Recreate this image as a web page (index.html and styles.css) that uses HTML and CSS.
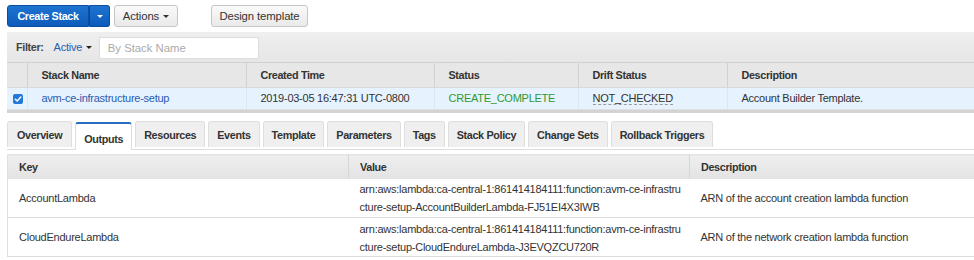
FILE: index.html
```html
<!DOCTYPE html>
<html>
<head>
<meta charset="utf-8">
<link rel="stylesheet" href="styles.css">
</head>
<body>
<div class="page">
  <div class="toolbar">
    <div class="split">
      <button class="btn-primary main">Create Stack</button>
      <button class="btn-primary caret-btn"><span class="caret white"></span></button>
    </div>
    <button class="btn actions">Actions <span class="caret"></span></button>
    <button class="btn design">Design template</button>
  </div>

  <div class="filterbar">
    <span class="filter-label">Filter:</span>
    <span class="filter-active">Active <span class="caret dark"></span></span>
    <input class="filter-input" type="text" placeholder="By Stack Name">
  </div>

  <table class="stacks">
    <colgroup>
      <col class="c0"><col class="c1"><col class="c2"><col class="c3"><col class="c4"><col class="c5">
    </colgroup>
    <thead>
      <tr><th></th><th>Stack Name</th><th>Created Time</th><th>Status</th><th>Drift Status</th><th>Description</th></tr>
    </thead>
    <tbody>
      <tr class="selected">
        <td class="chk"><span class="checkbox"><svg viewBox="0 0 10 10" width="10" height="10"><path d="M2.3 5.2 L4.2 7 L7.8 3" fill="none" stroke="#fff" stroke-width="1.5" stroke-linecap="round" stroke-linejoin="round"/></svg></span></td>
        <td class="link">avm-ce-infrastructure-setup</td>
        <td>2019-03-05 16:47:31 UTC-0800</td>
        <td class="ok">CREATE_COMPLETE</td>
        <td><span class="dotted">NOT_CHECKED</span></td>
        <td>Account Builder Template.</td>
      </tr>
    </tbody>
  </table>
  <div class="divider"></div>

  <div class="tabs">
    <div class="tab">Overview</div>
    <div class="tab active">Outputs</div>
    <div class="tab">Resources</div>
    <div class="tab">Events</div>
    <div class="tab">Template</div>
    <div class="tab">Parameters</div>
    <div class="tab">Tags</div>
    <div class="tab">Stack Policy</div>
    <div class="tab">Change Sets</div>
    <div class="tab">Rollback Triggers</div>
  </div>

  <table class="outputs">
    <colgroup><col class="k"><col class="v"><col class="d"></colgroup>
    <thead>
      <tr><th>Key</th><th>Value</th><th>Description</th></tr>
    </thead>
    <tbody>
      <tr>
        <td>AccountLambda</td>
        <td class="val"><span class="ln">arn:aws:lambda:ca-central-1:861414184111:function:avm-ce-infrastru</span><span class="ln">cture-setup-AccountBuilderLambda-FJ51EI4X3IWB</span></td>
        <td>ARN of the account creation lambda function</td>
      </tr>
      <tr>
        <td>CloudEndureLambda</td>
        <td class="val"><span class="ln">arn:aws:lambda:ca-central-1:861414184111:function:avm-ce-infrastru</span><span class="ln">cture-setup-CloudEndureLambda-J3EVQZCU720R</span></td>
        <td>ARN of the network creation lambda function</td>
      </tr>
    </tbody>
  </table>
</div>
</body>
</html>
```
FILE: styles.css
```css
* { box-sizing: border-box; }
html, body { margin: 0; padding: 0; background: #fff; }
body {
  font-family: "Liberation Sans", Arial, Helvetica, sans-serif;
  font-size: 11px;
  letter-spacing: -0.25px;
  color: #333;
  width: 974px;
  height: 260px;
  overflow: hidden;
}
.page { padding-left: 7px; }
th, .tab, .filter-label, .btn-primary {
  font-weight: bold;
  font-size: 10.8px;
  letter-spacing: -0.35px;
}

.toolbar {
  display: flex;
  padding-top: 5px;
  height: 32px;
  align-items: flex-start;
}
button { font-family: inherit; margin: 0; cursor: pointer; }
.split { display: flex; }
.btn-primary {
  height: 22px;
  border: 1px solid #0b4fa0;
  background: linear-gradient(#1f74d0, #0c5bbb);
  color: #fff;
}
.main {
  width: 82px;
  border-radius: 3px 0 0 3px;
  padding: 0;
}
.caret-btn {
  width: 21px;
  border-left: 1px solid #0a4896;
  border-radius: 0 3px 3px 0;
  padding: 0;
  display: flex;
  align-items: center;
  justify-content: center;
}
.caret {
  display: inline-block;
  width: 0; height: 0;
  border-left: 3px solid transparent;
  border-right: 3px solid transparent;
  border-top: 3px solid #333;
  vertical-align: 2px;
  margin-left: 1px;
}
.caret.white { border-top-color: #fff; }
.caret.dark { border-top-color: #222; }
.btn {
  height: 22px;
  border: 1px solid #c6c6c6;
  border-radius: 3px;
  background: linear-gradient(#fafafa, #e9e9e9);
  color: #333;
  font-size: 11.3px;
  letter-spacing: -0.1px;
  padding: 0;
}
.actions { margin-left: 4px; width: 64px; }
.design { margin-left: 33px; width: 97px; }

.filterbar {
  height: 31px;
  background: linear-gradient(#efefef, #e6e6e6);
  border-bottom: 1px solid #d0d0d0;
  display: flex;
  align-items: center;
  padding-left: 9px;
}
.filter-label { color: #444; }
.filter-active { color: #2a5cae; margin-left: 10px; }
.filter-input {
  margin-left: 7px;
  width: 160px;
  height: 22px;
  border: 1px solid #ddd;
  background: #fff;
  font-family: inherit;
  font-size: 11.3px;
  padding: 0 8px;
  margin-top: 1px;
}
.filter-input::placeholder { color: #aaa; }

table { border-collapse: collapse; table-layout: fixed; }
.stacks { width: 967px; }
.stacks col.c0 { width: 20px; }
.stacks col.c1 { width: 219px; }
.stacks col.c2 { width: 188px; }
.stacks col.c3 { width: 144px; }
.stacks col.c4 { width: 149px; }
.stacks col.c5 { width: 247px; }
.stacks th {
  height: 24px;
  background: #e7e7e7;
  text-align: left;
  color: #333;
  padding: 0 14px;
  border-left: 1px solid #d2d2d2;
  border-bottom: 1px solid #d9d9d9;
}
.stacks th:first-child { border-left: none; }
.stacks td {
  height: 22px;
  padding: 0 14px;
  background: #e6f2fe;
  border-left: 1px solid #dde5ee;
  white-space: nowrap;
}
.stacks td:first-child { border-left: none; }
.stacks td.chk { padding: 0 0 0 6px; }
.checkbox {
  display: flex;
  align-items: center;
  justify-content: center;
  width: 10px; height: 10px;
  background: #2378d8;
  border-radius: 2px;
  margin-top: 1px;
}
.link { color: #2a5cae; }
.ok { color: #2f9a30; }
.dotted { border-bottom: 1px dashed #999; }
.divider {
  height: 4px;
  background: #d3d3d3;
  border-top: 1px solid #e0e0e0;
}

.tabs {
  display: flex;
  gap: 3px;
  margin-top: 9px;
  height: 28px;
  border-bottom: 1px solid #ddd;
  align-items: flex-end;
  width: 967px;
}
.tab {
  height: 26px;
  margin-bottom: 2px;
  padding: 0 8px;
  display: flex;
  align-items: center;
  background: #efefef;
  border: 1px solid #dedede;
  border-bottom: none;
  border-radius: 3px 3px 0 0;
  color: #333;
}
.tab:first-child { padding: 0 9px; }
.tab.active {
  background: #fff;
  height: 28px;
  margin-bottom: -1px;
  border-top: 2px solid #2a6bc4;
  padding-top: 4px;
}

.outputs { width: 967px; margin-top: 4px; border-left: 1px solid #e0e0e0; }
.outputs col.k { width: 341px; }
.outputs col.v { width: 341px; }
.outputs col.d { width: 285px; }
.outputs th {
  height: 24px;
  background: linear-gradient(#efefef, #e3e3e3);
  text-align: left;
  color: #333;
  padding: 0 11px;
  border-left: 1px solid #d6d6d6;
  border-top: 1px solid #e4e4e4;
}
.outputs th:first-child { border-left: none; }
.outputs td {
  height: 39px;
  padding: 0 11px;
  border-bottom: 1px solid #dcdcdc;
  vertical-align: middle;
  white-space: nowrap;
}
.outputs td.val { padding: 1px 0 0 11px; }
.ln { display: block; line-height: 18px; }
```
